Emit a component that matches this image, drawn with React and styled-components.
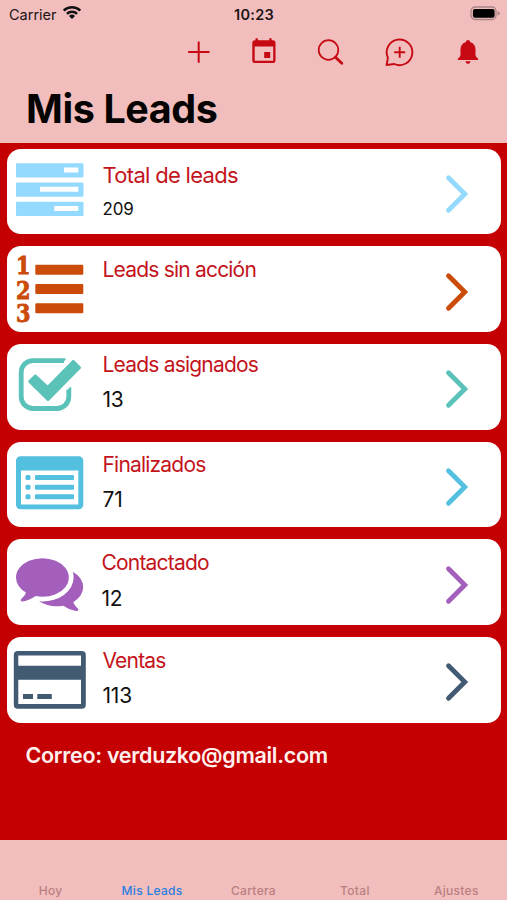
import React from 'react'
import styled, { createGlobalStyle } from 'styled-components'

const leads = [
  { title: 'Total de leads', value: '209', color: '#93dafe', icon: 'tasks', top: 13.5, gap: 9, small: true },
  { title: 'Leads sin acción', value: '', color: '#cb4b0a', icon: 'list', top: 10.8, gap: 10 },
  { title: 'Leads asignados', value: '13', color: '#5bc2b9', icon: 'check', top: 8, gap: 10 },
  { title: 'Finalizados', value: '71', color: '#53c0df', icon: 'table', top: 10.2, gap: 10.4 },
  { title: 'Contactado', value: '12', color: '#a35fbb', icon: 'chat', top: 10.9, gap: 10.4, shift: -1 },
  { title: 'Ventas', value: '113', color: '#425b73', icon: 'card', top: 10.9, gap: 10 },
]

const tabs = ['Hoy', 'Mis Leads', 'Cartera', 'Total', 'Ajustes']

const icons = {
  tasks: (
    <path
      fillRule="evenodd"
      d="M10 14.3h65.5a1 1 0 0 1 1 1v12.3a1 1 0 0 1-1 1H10a1 1 0 0 1-1-1V15.3a1 1 0 0 1 1-1zM57 18.6v5h14.3v-5zM10 33.5h65.5a1 1 0 0 1 1 1v12.3a1 1 0 0 1-1 1H10a1 1 0 0 1-1-1V34.5a1 1 0 0 1 1-1zM33 37.8v5h38.3v-5zM10 52.7h65.5a1 1 0 0 1 1 1V66a1 1 0 0 1-1 1H10a1 1 0 0 1-1-1V53.7a1 1 0 0 1 1-1zM47.3 57v5h24v-5z"
    />
  ),
  list: (
    <>
      <Digit x="9" y="28.3">1</Digit>
      <Digit x="9" y="52.5">2</Digit>
      <Digit x="9" y="76.2">3</Digit>
      <rect x="28.3" y="18.8" width="48" height="10" rx="1" />
      <rect x="28.3" y="38.1" width="48" height="10" rx="1" />
      <rect x="28.3" y="57.3" width="48" height="10" rx="1" />
    </>
  ),
  check: (
    <>
      <path
        d="M57 16.6H26a11.800 11.800 0 0 0-11.800 11.800v24.300A11.800 11.800 0 0 0 26 64.500h24a11.800 11.800 0 0 0 11.800-11.800V46"
        fill="none"
        stroke="currentColor"
        strokeWidth="4.8"
      />
      <path d="M56.500 14.200h1q2 .3 1.300 1.200L55.600 19h-1zM59.400 46.800l3.700-3.900q1.100-.6 1.100.6v3.300z" />
      <path
        d="M22.5 38.2l5.8-5.8 12.400 11.500 25.600-26 6.500 6.500L41 56.500z"
        stroke="currentColor"
        strokeWidth="2.5"
        strokeLinejoin="round"
        transform="translate(0 -.7)"
      />
    </>
  ),
  table: (
    <>
      <path fillRule="evenodd" d="M13.5 14.2h58.3a4.5 4.5 0 0 1 4.5 4.5v44a4.5 4.5 0 0 1-4.5 4.5H13.5A4.5 4.5 0 0 1 9 62.7v-44a4.5 4.5 0 0 1 4.5-4.5zM14 28.5v34h57.3v-34z" />
      {[35.5, 45.2, 54.8].map((y) => (
        <g key={y}>
          <rect x="18.5" y={y - 2.5} width="5" height="5" rx="1.5" />
          <rect x="28" y={y - 2.5} width="39" height="5" rx="1" />
        </g>
      ))}
    </>
  ),
  chat: (
    <path
      transform="translate(9 9.7) scale(.0375)"
      d="M1408 768q0 139-94 257t-256.500 186.500-353.500 68.500q-86 0-176-16-124 88-278 128-36 9-86 16h-3q-11 0-20.500-8t-11.500-21q-1-3-1-6.500t.5-6.500 2-6l2.500-5 3.500-5.500 4-5 4.500-5 4-4.500q5-6 23-25t26-29.500 22.500-29 25-38.500 20.500-44q-124-72-195-177t-71-224q0-139 94-257t256.500-186.500 353.500-68.500 353.500 68.500 256.500 186.500 94 257zm384 256q0 120-71 224.500t-195 176.500q10 24 20.500 44t25 38.500 22.500 29 26 29.500 23 25q1 1 4 4.500t4.500 5 4 5 3.500 5.500l2.500 5 2 6 .5 6.500-1 6.500q-3 14-13 22t-22 7q-50-7-86-16-154-40-278-128-90 16-176 16-271 0-472-132 58 4 88 4 161 0 309-45t264-129q125-92 192-212t67-254q0-77-23-152 129 71 204 178t75 230z"
    />
  ),
  card: (
    <>
      <path fillRule="evenodd" d="M10.8 14h64a4 4 0 0 1 4 4v49.700a4 4 0 0 1-4 4h-64a4 4 0 0 1-4-4V18a4 4 0 0 1 4-4zM11.3 18.600v10.100H74V18.600zM11.300 42.700v24.300H74V42.700z" />
      <path d="M16 57h10v5H16zM30.300 57h14.500v5H30.300z" />
    </>
  ),
}

function Digit({ x, y, children }) {
  return (
    <DigitText x={x} y={y} textLength="14.5" lengthAdjust="spacingAndGlyphs">
      {children}
    </DigitText>
  )
}

const StatusBar = () => (
  <Status>
    <Carrier>
      Carrier
      <svg width="20" height="15" viewBox="0 0 20 15" fill="none" stroke="#111" strokeWidth="2.5">
        <path d="M1.7 5.6a11.800 11.800 0 0 1 16.600 0" />
        <path d="M4.9 8.9a7.200 7.200 0 0 1 10.200 0" />
        <path d="M10 14l-3-3a4.300 4.300 0 0 1 6 0z" fill="#111" stroke="none" />
      </svg>
    </Carrier>
    <Clock>10:23</Clock>
    <Battery>
      <svg width="31" height="15" viewBox="0 0 31 15">
        <rect x="1" y="1" width="25" height="12.5" rx="4" fill="none" stroke="#a98586" strokeWidth="1.3" />
        <rect x="2.9" y="2.9" width="21.7" height="8.9" rx="2" fill="#000" />
        <path d="M27.500 5v4.600q2.300-.7 2.300-2.300T27.500 5z" fill="#a98586" />
      </svg>
    </Battery>
  </Status>
)

const Toolbar = () => (
  <Tools>
    <ToolButton aria-label="Agregar">
      <svg width="30" height="30" viewBox="0 0 30 30" stroke="currentColor" strokeWidth="2">
        <path d="M14.700 4.500v21.300M4.200 15.100h21.300" />
      </svg>
    </ToolButton>
    <ToolButton aria-label="Calendario" $left={35}>
      <svg width="30" height="30" viewBox="0 0 30 30" fill="currentColor">
        <path fillRule="evenodd" d="M6.500 1.300h2.300v2h11.500V1.300h2.300v2H24a2.500 2.500 0 0 1 2.500 2.500v17.700A2.500 2.500 0 0 1 24 26H5.800a2.500 2.500 0 0 1-2.500-2.500V5.800a2.500 2.500 0 0 1 2.500-2.500h.7zM5.700 9.500v14.200h18.500V9.500z" />
        <path d="M15.200 15h6v6h-6z" />
      </svg>
    </ToolButton>
    <ToolButton aria-label="Buscar" $left={36}>
      <svg width="30" height="30" viewBox="0 0 30 30" fill="none" stroke="currentColor">
        <circle cx="13.500" cy="13" r="9.800" strokeWidth="1.700" />
        <path d="M20.500 20.300l6.300 6" strokeWidth="2.800" strokeLinecap="round" />
      </svg>
    </ToolButton>
    <ToolButton aria-label="Nuevo mensaje" $left={39}>
      <svg width="30" height="30" viewBox="0 0 30 30" fill="none" stroke="currentColor" strokeWidth="1.900">
        <path d="M2.600 28l1.300-7.300A12.800 12.800 0 1 1 10.300 27q-3.700.6-7.700 1z" strokeLinejoin="round" />
        <path d="M15.700 9.800v11M10.200 15.300h11" />
      </svg>
    </ToolButton>
    <ToolButton aria-label="Avisos" $left={39}>
      <svg width="30" height="30" viewBox="0 0 30 30" fill="currentColor">
        <path d="M15 3c1.300 0 1.900.8 2 2 3.500 1 5.500 3.700 5.500 7.300V18q.2 2.300 2.600 3.500V23H4.900v-1.500Q7.300 20.300 7.500 18v-5.700c0-3.600 2-6.300 5.500-7.300.1-1.200.7-2 2-2zM12.400 24.200h5.200q-.5 2.800-2.600 2.800t-2.600-2.800z" />
      </svg>
    </ToolButton>
  </Tools>
)

const LeadCard = ({ lead }) => (
  <Card>
    <CardIcon viewBox="0 0 95 86" $color={lead.color}>
      {icons[lead.icon]}
    </CardIcon>
    <CardText $top={lead.top} $gap={lead.gap} $shift={lead.shift || 0}>
      <CardTitle $big={lead.small}>{lead.title}</CardTitle>
      {lead.value && <CardValue $small={lead.small}>{lead.value}</CardValue>}
    </CardText>
    <Chevron viewBox="0 0 26 40" $color={lead.color}>
      <path d="M4.500 3.700L20.800 20 4.500 36.300" />
    </Chevron>
  </Card>
)

const App = () => {
  return (
    <>
      <GlobalStyle />
      <Screen>
        <Header>
          <StatusBar />
          <Toolbar />
          <Title>Mis Leads</Title>
        </Header>
        <Main>
          {leads.map((lead) => (
            <LeadCard key={lead.title} lead={lead} />
          ))}
          <Mail>Correo: verduzko@gmail.com</Mail>
        </Main>
        <TabBar>
          {tabs.map((tab) => (
            <Tab key={tab} $active={tab === 'Mis Leads'}>{tab}</Tab>
          ))}
        </TabBar>
      </Screen>
    </>
  )
}

export default App

const GlobalStyle = createGlobalStyle`
  * {
    box-sizing: border-box;
  }
  body {
    margin: 0;
    font-family: Inter, 'Liberation Sans', sans-serif;
  }
`

const Screen = styled.div`
  display: flex;
  flex-direction: column;
  width: 507px;
  height: 900px;
  overflow: hidden;
  background: #c40003;
`

const Header = styled.header`
  height: 142.5px;
  flex: none;
  background: #f1bebd;
`

const Status = styled.div`
  display: grid;
  grid-template-columns: 1fr auto 1fr;
  align-items: center;
  height: 28px;
  padding: 0 6px 0 9px;
  font-size: 14.5px;
  color: #1c1415;
`

const Carrier = styled.div`
  display: flex;
  align-items: center;
  gap: 5px;

  svg {
    margin-top: -4px;
  }
`

const Clock = styled.div`
  margin-right: 2px;
  font-weight: 600;
  letter-spacing: 0.3px;
`

const Battery = styled.div`
  display: flex;
  justify-content: flex-end;
  margin-top: -2px;
`

const Tools = styled.nav`
  display: flex;
  height: 53px;
  padding: 9px 24px 0 0;
  justify-content: flex-end;
`

const ToolButton = styled.button`
  width: 30px;
  height: 30px;
  margin-left: ${({ $left }) => $left || 0}px;
  padding: 0;
  border: 0;
  background: none;
  color: #c60912;

  svg {
    display: block;
  }
`

const Title = styled.h1`
  margin: 4px 0 0 26px;
  font-size: 39.5px;
  line-height: 48px;
  font-weight: 700;
  letter-spacing: -0.4px;
  color: #060303;
`

const Main = styled.main`
  display: flex;
  flex-direction: column;
  flex: 1;
  gap: 12px;
  padding: 6.2px 6px 0 7px;
`

const Card = styled.section`
  display: flex;
  align-items: flex-start;
  flex: none;
  height: 85.7px;
  border-radius: 14px;
  background: #fff;
`

const CardIcon = styled.svg`
  width: 95px;
  height: 86px;
  flex: none;
  fill: currentColor;
  color: ${({ $color }) => $color};
`

const DigitText = styled.text`
  font: bold 25px 'DejaVu Serif', serif;
  stroke: currentColor;
  stroke-width: 0.9px;
`

const CardText = styled.div`
  display: flex;
  flex-direction: column;
  flex: 1;
  gap: ${({ $gap }) => $gap}px;
  padding-top: ${({ $top }) => $top}px;
  margin-left: ${({ $shift }) => $shift}px;
`

const CardTitle = styled.div`
  padding-left: 0.5px;
  font-size: ${({ $big }) => ($big ? '22px' : '21px')};
  line-height: 26px;
  letter-spacing: ${({ $big }) => ($big ? '-0.7px' : '-0.8px')};
  color: #c4141b;
`

const CardValue = styled.div`
  padding-left: 0.5px;
  font-size: ${({ $small }) => ($small ? '17px' : '21px')};
  line-height: 24px;
  letter-spacing: -0.2px;
  color: #111;
`

const Chevron = styled.svg`
  width: 26px;
  height: 40px;
  margin: 25.2px 31px 0 0;
  fill: none;
  stroke: ${({ $color }) => $color};
  stroke-width: 4.8;
  stroke-linecap: round;
`

const Mail = styled.p`
  margin: 7px 0 0 18.5px;
  font-size: 21.5px;
  line-height: 26px;
  font-weight: 600;
  letter-spacing: -0.3px;
  color: #fff0ee;
`

const TabBar = styled.footer`
  display: grid;
  grid-template-columns: repeat(5, 1fr);
  align-items: end;
  height: 60px;
  flex: none;
  padding: 0 0 1px;
  background: #f1bebd;
`

const Tab = styled.div`
  text-align: center;
  font-size: 12px;
  line-height: 16px;
  font-weight: 500;
  letter-spacing: 0.3px;
  color: ${({ $active }) => ($active ? '#2b7de0' : '#bb7f80')};
`
